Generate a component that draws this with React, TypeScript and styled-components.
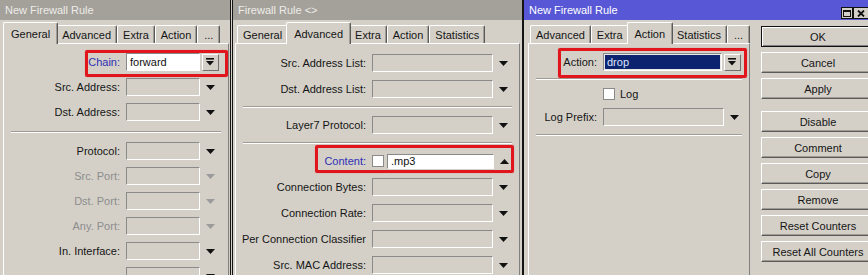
import React from 'react'
import styled, { createGlobalStyle } from 'styled-components'

const GlobalStyle = createGlobalStyle`
  html, body {
    margin: 0;
    padding: 0;
    background: #d4d0c8;
  }
  body {
    font-family: "Liberation Sans", Arial, sans-serif;
    font-size: 11px;
    color: #151515;
  }
`

const Screen = styled.div`
  display: flex;
  width: 868px;
  height: 275px;
  overflow: hidden;
  background: #d4d0c8;
`

const Window = styled.div<{ $width: number; $gap?: number; $edgeL?: boolean; $edgeR?: boolean }>`
  flex: 0 0 ${p => p.$width}px;
  box-sizing: border-box;
  display: flex;
  flex-direction: column;
  margin-left: ${p => p.$gap ?? 0}px;
  border-left: ${p => (p.$edgeL ? '1px solid #141414' : 'none')};
  border-right: ${p => (p.$edgeR ? '1px solid #141414' : 'none')};
  background: #d4d0c8;
`

const TitleBar = styled.div<{ $active?: boolean }>`
  height: 20px;
  flex-shrink: 0;
  display: flex;
  align-items: center;
  padding-left: 5px;
  background: ${p => (p.$active ? '#5858d6' : '#a4a19b')};
  color: ${p => (p.$active ? '#ffffff' : '#eeece8')};
  white-space: nowrap;
`

const TitleControls = styled.div`
  display: flex;
  margin-left: auto;
  margin-right: 9px;
  align-self: flex-end;
  margin-bottom: 1px;
`

const CtlBox = styled.div<{ $w: number }>`
  width: ${p => p.$w}px;
  height: 12px;
  box-sizing: border-box;
  border: 1px solid #111;
  background: #d4d0c8;
  display: flex;
  align-items: center;
  justify-content: center;
`

const Body = styled.div<{ $padL: number; $padR: number }>`
  flex: 1;
  display: flex;
  padding: 2px ${p => p.$padR}px 0 ${p => p.$padL}px;
  min-height: 0;
`

const TabArea = styled.div<{ $width?: number }>`
  display: flex;
  flex-direction: column;
  flex: ${p => (p.$width ? `0 0 ${p.$width}px` : '1')};
  min-width: 0;
`

const TabStrip = styled.div`
  display: flex;
  align-items: flex-end;
  height: 21px;
  flex-shrink: 0;
  padding-left: 2px;
`

const Tab = styled.div<{ $active?: boolean; $min?: number }>`
  position: relative;
  box-sizing: border-box;
  height: ${p => (p.$active ? 22 : 18)}px;
  min-width: ${p => p.$min ?? 0}px;
  padding: ${p => (p.$active ? '0 7px' : '1px 5px 0')};
  margin: ${p => (p.$active ? '0 -2px -1px' : '0')};
  z-index: ${p => (p.$active ? 2 : 1)};
  display: flex;
  align-items: center;
  justify-content: center;
  white-space: nowrap;
  background: #d4d0c8;
  border-top: 1px solid #ffffff;
  border-left: 1px solid #ffffff;
  border-right: 1px solid #5a5a5a;
  box-shadow: inset -1px 0 0 #a09c94;
  border-radius: 2px 2px 0 0;
`

const Panel = styled.div<{ $padTop: number; $gap: number }>`
  flex: 1;
  display: flex;
  flex-direction: column;
  gap: ${p => p.$gap}px;
  padding-top: ${p => p.$padTop}px;
  border-top: 1px solid #ffffff;
  border-left: 1px solid #ffffff;
  border-right: 1px solid #808080;
`

const Row = styled.div<{ $h?: number }>`
  position: relative;
  display: flex;
  align-items: center;
  height: ${p => p.$h ?? 18}px;
  flex-shrink: 0;
`

const Label = styled.span<{ $w: number; $tone?: 'link' | 'muted' }>`
  flex: 0 0 ${p => p.$w}px;
  box-sizing: border-box;
  padding-right: 6px;
  text-align: right;
  white-space: nowrap;
  overflow: hidden;
  color: ${p => (p.$tone === 'link' ? '#2f2fb4' : p.$tone === 'muted' ? '#8d8d8d' : '#151515')};
`

const Field = styled.div<{ $w: number; $h?: number; $fill?: 'white' | 'select' }>`
  flex: 0 0 ${p => p.$w}px;
  height: ${p => p.$h ?? 18}px;
  box-sizing: border-box;
  display: flex;
  align-items: center;
  padding-left: 3px;
  border-top: 1px solid #8a8a8a;
  border-left: 1px solid #8a8a8a;
  border-bottom: 1px solid #ffffff;
  border-right: 1px solid #ffffff;
  background: ${p => (p.$fill === 'white' ? '#ffffff' : p.$fill === 'select' ? '#0c2470' : '#d4d0c8')};
  color: ${p => (p.$fill === 'select' ? '#dfe5ff' : '#111')};
  box-shadow: ${p => (p.$fill === 'select' ? 'inset 0 0 0 1px #e8e8e8' : 'none')};
  white-space: nowrap;
`

const Slot = styled.div`
  flex: 0 0 18px;
  height: 18px;
  margin-left: 1px;
  display: flex;
  align-items: center;
  justify-content: center;
`

const DropButton = styled.div`
  width: 17px;
  height: 17px;
  box-sizing: border-box;
  display: flex;
  align-items: center;
  justify-content: center;
  background: #d4d0c8;
  border-top: 1px solid #ffffff;
  border-left: 1px solid #ffffff;
  border-right: 1px solid #707070;
  border-bottom: 1px solid #707070;
`

const Check = styled.div`
  flex: 0 0 12px;
  height: 12px;
  box-sizing: border-box;
  background: #ffffff;
  border: 1px solid #8a8a8a;
  margin-right: 3px;
`

const CheckText = styled.span`
  margin-left: 2px;
`

const Sep = styled.div<{ $mt?: number; $mb?: number }>`
  flex-shrink: 0;
  height: 0;
  border-top: 1px solid #a09c94;
  border-bottom: 1px solid #ffffff;
  margin: ${p => p.$mt ?? 0}px 7px ${p => p.$mb ?? 0}px;
`

const Highlight = styled.div<{ $l: number; $r: number; $t: number; $b: number }>`
  position: absolute;
  left: ${p => p.$l}px;
  right: ${p => p.$r}px;
  top: ${p => p.$t}px;
  bottom: ${p => p.$b}px;
  border: 3px solid #e1161d;
  border-radius: 2px;
  box-shadow: 0 0 1px rgba(225, 22, 29, 0.6);
  pointer-events: none;
  z-index: 3;
`

const ButtonColumn = styled.div`
  flex: 0 0 114px;
  display: flex;
  flex-direction: column;
  gap: 5px;
  margin-left: 11px;
  padding-top: 4px;
`

const Btn = styled.div<{ $primary?: boolean; $space?: number }>`
  height: 21px;
  flex-shrink: 0;
  box-sizing: border-box;
  margin-top: ${p => p.$space ?? 0}px;
  display: flex;
  align-items: center;
  justify-content: center;
  background: #d4d0c8;
  border: 1px solid;
  border-color: ${p => (p.$primary ? '#111 #111 #111 #111' : '#ffffff #5a5a5a #5a5a5a #ffffff')};
  box-shadow: ${p =>
    p.$primary ? 'inset 1px 1px 0 #ffffff, inset -1px -1px 0 #808080' : 'inset -1px -1px 0 #a09c94'};
  white-space: nowrap;
`

const DownTri = ({ muted }: { muted?: boolean }) => (
  <svg width="9" height="5" viewBox="0 0 9 5">
    <polygon points="0,0 9,0 4.5,5" fill={muted ? '#9b9b9b' : '#111'} />
  </svg>
)

const UpTri = () => (
  <svg width="9" height="5" viewBox="0 0 9 5">
    <polygon points="0,5 9,5 4.5,0" fill="#111" />
  </svg>
)

const BarArrow = () => (
  <svg width="8" height="8" viewBox="0 0 8 8">
    <rect x="0" y="0" width="8" height="1.6" fill="#111" />
    <polygon points="0,3 8,3 4,7.5" fill="#111" />
  </svg>
)

type Tone = 'link' | 'muted' | undefined

const ListRow = ({ label, lw, iw, tone }: { label: string; lw: number; iw: number; tone?: Tone }) => (
  <Row>
    <Label $w={lw} $tone={tone}>{label}</Label>
    <Field $w={iw} />
    <Slot>
      <DownTri muted={tone === 'muted'} />
    </Slot>
  </Row>
)

const GeneralWindow = () => (
  <Window $width={231} $edgeR>
    <TitleBar>New Firewall Rule</TitleBar>
    <Body $padL={3} $padR={1}>
      <TabArea>
        <TabStrip>
          <Tab $active>General</Tab>
          <Tab>Advanced</Tab>
          <Tab>Extra</Tab>
          <Tab>Action</Tab>
          <Tab $min={23}>...</Tab>
        </TabStrip>
        <Panel $padTop={9} $gap={7}>
          <Row>
            <Label $w={122} $tone="link">Chain:</Label>
            <Field $w={74} $fill="white">forward</Field>
            <Slot>
              <DropButton>
                <BarArrow />
              </DropButton>
            </Slot>
            <Highlight $l={81} $r={0} $t={-3} $b={-6} />
          </Row>
          <ListRow label="Src. Address:" lw={122} iw={74} />
          <ListRow label="Dst. Address:" lw={122} iw={74} />
          <Sep $mt={3} $mb={2} />
          <ListRow label="Protocol:" lw={122} iw={74} />
          <ListRow label="Src. Port:" lw={122} iw={74} tone="muted" />
          <ListRow label="Dst. Port:" lw={122} iw={74} tone="muted" />
          <ListRow label="Any. Port:" lw={122} iw={74} tone="muted" />
          <ListRow label="In. Interface:" lw={122} iw={74} />
          <ListRow label="" lw={122} iw={74} />
        </Panel>
      </TabArea>
    </Body>
  </Window>
)

const AdvancedWindow = () => (
  <Window $width={291} $gap={1} $edgeL $edgeR>
    <TitleBar>Firewall Rule &lt;&gt;</TitleBar>
    <Body $padL={2} $padR={2}>
      <TabArea>
        <TabStrip>
          <Tab>General</Tab>
          <Tab $active>Advanced</Tab>
          <Tab>Extra</Tab>
          <Tab>Action</Tab>
          <Tab>Statistics</Tab>
        </TabStrip>
        <Panel $padTop={10} $gap={8}>
          <ListRow label="Src. Address List:" lw={136} iw={121} />
          <ListRow label="Dst. Address List:" lw={136} iw={121} />
          <Sep />
          <ListRow label="Layer7 Protocol:" lw={136} iw={121} />
          <Sep />
          <Row>
            <Label $w={136} $tone="link">Content:</Label>
            <Check />
            <Field $w={107} $h={15} $fill="white">.mp3</Field>
            <Slot>
              <UpTri />
            </Slot>
            <Highlight $l={79} $r={5} $t={-7} $b={-3} />
          </Row>
          <ListRow label="Connection Bytes:" lw={136} iw={121} />
          <ListRow label="Connection Rate:" lw={136} iw={121} />
          <ListRow label="Per Connection Classifier" lw={136} iw={121} />
          <ListRow label="Src. MAC Address:" lw={136} iw={121} />
        </Panel>
      </TabArea>
    </Body>
  </Window>
)

const ActionWindow = () => (
  <Window $width={355} $edgeL>
    <TitleBar $active>
      New Firewall Rule
      <TitleControls>
        <CtlBox $w={12}>
          <svg width="8" height="7" viewBox="0 0 8 7">
            <rect x="0.5" y="0.5" width="7" height="6" fill="none" stroke="#111" />
            <rect x="0" y="0" width="8" height="2" fill="#111" />
          </svg>
        </CtlBox>
        <CtlBox $w={16}>
          <svg width="8" height="7" viewBox="0 0 8 7">
            <path d="M1 0.5 L7 6.5 M7 0.5 L1 6.5" stroke="#111" strokeWidth="1.8" />
          </svg>
        </CtlBox>
      </TitleControls>
    </TitleBar>
    <Body $padL={4} $padR={3}>
      <TabArea $width={222}>
        <TabStrip>
          <Tab>Advanced</Tab>
          <Tab>Extra</Tab>
          <Tab $active>Action</Tab>
          <Tab>Statistics</Tab>
          <Tab $min={23}>...</Tab>
        </TabStrip>
        <Panel $padTop={9} $gap={7}>
          <Row>
            <Label $w={74}>Action:</Label>
            <Field $w={119} $fill="select">drop</Field>
            <Slot>
              <DropButton>
                <BarArrow />
              </DropButton>
            </Slot>
            <Highlight $l={29} $r={2} $t={-5} $b={-7} />
          </Row>
          <Sep />
          <Row $h={14}>
            <Label $w={74} />
            <Check />
            <CheckText>Log</CheckText>
          </Row>
          <ListRow label="Log Prefix:" lw={74} iw={121} />
          <Sep $mt={1} />
        </Panel>
      </TabArea>
      <ButtonColumn>
        <Btn $primary>OK</Btn>
        <Btn>Cancel</Btn>
        <Btn>Apply</Btn>
        <Btn $space={7}>Disable</Btn>
        <Btn>Comment</Btn>
        <Btn>Copy</Btn>
        <Btn>Remove</Btn>
        <Btn>Reset Counters</Btn>
        <Btn>Reset All Counters</Btn>
      </ButtonColumn>
    </Body>
  </Window>
)

const App = () => (
  <>
    <GlobalStyle />
    <Screen>
      <GeneralWindow />
      <AdvancedWindow />
      <ActionWindow />
    </Screen>
  </>
)

export default App
